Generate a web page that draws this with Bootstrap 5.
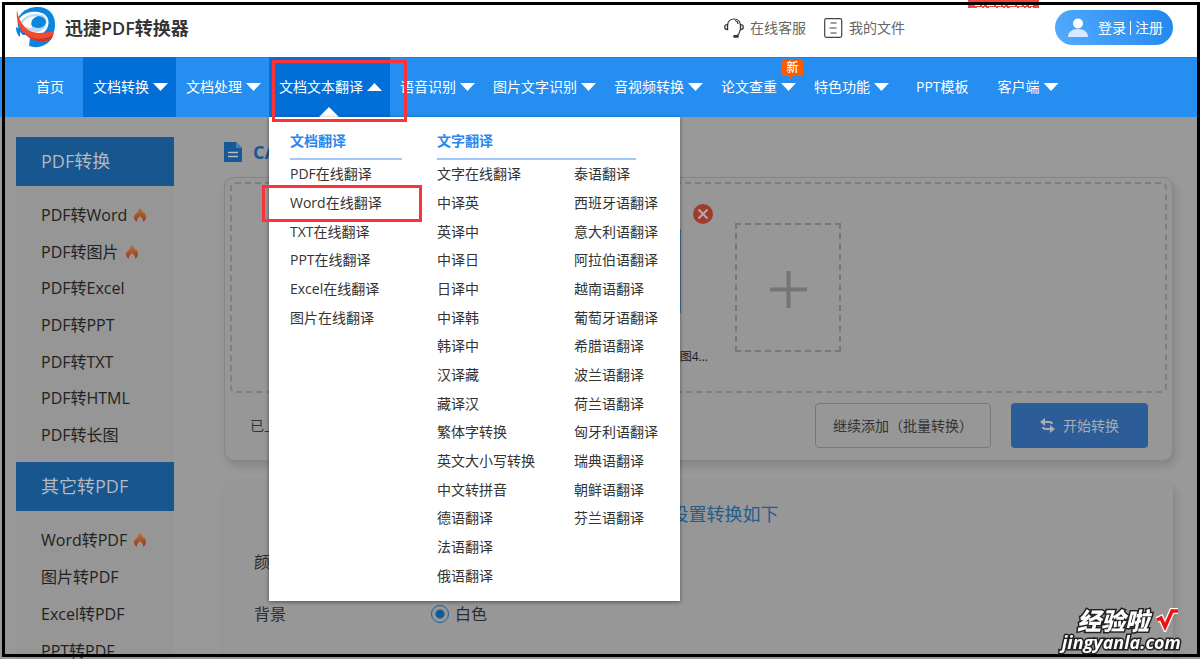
<!DOCTYPE html>
<html lang="zh-CN">
<head>
<meta charset="utf-8">
<meta name="viewport" content="width=device-width, initial-scale=1">
<title>迅捷PDF转换器</title>
<link rel="stylesheet" href="https://cdn.jsdelivr.net/npm/bootstrap@5.3.0/dist/css/bootstrap.min.css">
<style>
:root{--blue:#268ef0;--blue-dark:#026fd8;--shade:#999;--red:#fb3338}
body{font:14px/20px "Open Sans","Noto Sans CJK SC",sans-serif;color:#333;background:var(--shade);height:100vh;overflow:hidden}
a{text-decoration:none;color:inherit}
.page-frame{position:fixed;inset:2px 0 2px 2px;border:3px solid #000;pointer-events:none;z-index:50}
/* header */
.top-bar{background:#fff;height:57px;padding:0 27px 2px 15px;position:relative}
.brand-name{font-size:18px;font-weight:600;color:#333;margin-left:9px}
.top-link{color:#666;gap:6px}
.top-link.files{margin:0 150px 0 18px}
.promo{position:absolute;right:161px;top:0}
.login-btn{height:35px;border:0;border-radius:18px;padding:0 10px 0 13px;color:#fff;background:linear-gradient(60deg,#55acff,#1f87ee);gap:10px}
.login-btn .bar{width:1px;height:14px;background:#fff;margin:0 4px}
/* navigation */
.main-nav{background:var(--blue);height:60px;padding-left:17px;position:relative;z-index:10;color:#fff;box-shadow:inset 0 1px #1c80e6}
.nav-cell{height:60px;padding:0 8px 0 10px;gap:4px;position:relative;white-space:nowrap}
.nav-cell.plain{padding:0 19px}
.nav-cell.on{background:var(--blue-dark)}
.tri{width:15px;height:8px;background:#fff;clip-path:polygon(0 0,100% 0,50% 100%)}
.tri.up{clip-path:polygon(50% 0,100% 100%,0 100%)}
.nav-cell .pointer{position:absolute;bottom:0;left:50px;width:20px;height:10px}
.new-tag{position:absolute;top:3px;right:1px;width:21px;height:16px;border-radius:2px;background:#ff5a00;font-size:12px;line-height:16px;text-align:center;font-weight:500}
.new-tag::after{content:"";position:absolute;left:8px;top:16px;border:3px solid transparent;border-top:4px solid #ff5a00;border-left-width:0}
.mark-nav{position:absolute;left:3px;top:3px;width:135px;height:62px;border:3px solid var(--red);z-index:5}
.mark-item{position:absolute;left:-28px;top:-5px;width:160px;height:37px;border:3px solid var(--red)}
/* mega menu */
.mega{position:absolute;left:0;top:60px;width:411px;padding:9px 22px 10px 21px;background:#fff;color:#333;box-shadow:0 1px 4px #0007;gap:35px}
.mega h2{font-size:14px;line-height:30px;font-weight:700;color:#2a87ee;margin:0 0 1px;border-bottom:2px solid #a0c8f8;height:34px}
.mega-a{width:112px}
.mega-b h2{width:199px}
.mega ul{display:grid;grid-template-rows:repeat(15,1fr);height:430px;margin:0;padding:0;list-style:none}
.mega li{position:relative;display:flex;align-items:center;white-space:nowrap;padding-bottom:2px}
.mega-b .lists{display:grid;grid-template-columns:137px auto}
/* sidebar */
.side{width:158px;flex:none}
.side h2{background:#17568f;color:#b5b9bd;font-size:18px;line-height:49px;margin:0;padding-left:25px;font-weight:400}
.side ul{list-style:none;margin:0;padding:11px 0 9px 25px;min-height:276px;background:#969696;display:flex;flex-direction:column}
.side ul.short{min-height:167px}
.side li{flex:1;display:flex;align-items:center;gap:7px;font-size:16px;color:#222}
/* main column */
.layout{padding:20px 27px 0 16px;gap:50px}
.tool-title{font-size:18px;font-weight:700;color:#1a5792;line-height:30px;margin:0 0 10px;gap:11px}
.panel{background:#979797;border-radius:10px;box-shadow:3px 5px 9px #0002}
.panel.upload{border:1px solid #868686;padding:4px 5px 12px}
.drop{border:2px dashed #7f7f7f;border-radius:5px;height:211px;padding:39px 0 0;gap:27px}
.file-item{position:relative;width:108px;margin-left:368px;text-align:right;font-size:12px;color:#1b1b1b}
.thumb{width:81px;height:84px;border:2px solid #426f98;margin:6px 0 34px}
.remove{position:absolute;right:-5px;top:-19px;border:0;background:none;padding:0;line-height:0}
.add-tile{width:106px;height:129px;border:2px dashed #777;border-radius:0;background:none;padding:4px 0 0}
.upload-foot{padding:10px 19px 0 20px}
.act{height:45px;border-radius:4px;font-size:14px;padding:0}
.act-add{width:176px;border:1px solid #777;background:none;color:#333}
.act-go{width:137px;border:0;background:#2c5d98;color:#a8adb3;gap:8px}
.panel.settings{margin-top:20px;height:240px;padding:18px 30px;font-size:16px;color:#2c2c2c}
.settings h3{font-size:18px;line-height:30px;color:#235d8d;margin:0 0 23px;padding-right:20px;text-align:center;font-weight:400}
.opt-row{height:52px}
.opt-name{width:177px}
.opt-row input{appearance:none;width:18px;height:18px;margin:0 6px 0 0;border:1px solid #1a5e9d;border-radius:50%;background:radial-gradient(circle,#165998 4px,transparent 5px)}
/* watermark */
.wm{position:fixed;right:14px;bottom:7px;z-index:60;width:124px;color:#fff;-webkit-text-stroke:3px #222;paint-order:stroke fill}
.wm-cn{font:italic 900 24px/24px "Noto Sans CJK SC",sans-serif;padding-left:15px;gap:6px}
.wm-url{font:italic 700 18px/20px "Open Sans",sans-serif}
</style>
</head>
<body>
<svg width="0" height="0" class="position-absolute"><defs>
<linearGradient id="fg" x1="0" y1="0" x2="0" y2="1"><stop offset="0" stop-color="#b87335"/><stop offset="1" stop-color="#9c351c"/></linearGradient>
<symbol id="fire" viewBox="0 0 12 14"><path fill="url(#fg)" d="M5.500 0C9 2 8.300 4.500 9.300 5.400l.5-1.700C11 5.500 12 7.200 12 9.300c0 2.200-1.300 3.900-3 4.500.5-1.900-.4-4-3-5.600-2.400 1.500-3.500 3.700-3 5.600C1.300 13.100 0 11.500 0 9.300 0 6 3.200 5.500 4 3.400 5 2.300 5.200 1.200 5.500 0z"/></symbol>
</defs></svg>

<header class="top-bar d-flex align-items-center">
  <svg width="41" height="41" viewBox="0 0 41 41" aria-hidden="true">
    <path fill="#0c85dc" d="M3 11C8 2 16 0 23 0c10 0 17 7 17 17 0 6-1 8-3 11H8C3 24 2 18 3 11z"/>
    <path fill="#fff" d="M3 13C8 6 15 4 23 5c9 1 12 8 10 14-2 6-7 10-14 9C10 26 4 21 3 13z"/>
    <path fill="#b8dcf7" d="M5 16c4-7 10-9 18-9 7 0 10 6 8 11-3 7-9 8-15 6-5-2-8-4-11-8z"/>
    <ellipse cx="23" cy="15" rx="8" ry="6" fill="#0c85dc"/>
    <path fill="#fff" d="M7 17c4-6 10-8 16-8-6 2-8 6-6 12-5 0-8-1-10-4z"/>
    <path fill="#0c85dc" d="M1 20c0 4 1 8 4 10v-8zM15 31l-1 8c9 3 18 0 23-8z"/>
    <path fill="#f34a32" d="M2 3c2 14 11 23 22 23 6 0 11-1 15-2 0 3-1 6-3 8-9 5-20 2-27-6C3 20 1 11 2 3z"/>
    <path fill="#cf3425" d="M8 25c9 8 19 9 30 3l-2 4c-9 5-20 2-28-7z"/>
  </svg>
  <a href="#" class="brand-name">迅捷PDF转换器</a>
  <a href="#" class="top-link d-flex align-items-center ms-auto">
    <svg width="20" height="20" viewBox="0 0 20 20" fill="none" stroke="#333" stroke-width="1.200"><path d="M3.500 12V7C4.500-1 15.500-1 16.500 7v5"/><path d="M3.500 6.500C1 6.500.7 7.800.7 9s.3 2.700 2.800 2.700zM16.500 6.500c2.500 0 2.800 1.300 2.800 2.500s-.3 2.700-2.800 2.700zM16 12c-.5 4-2 5.500-4 6M11 2.500c2 .6 3 2 3 3.500"/><path d="M10.500 18.400h3" stroke-width="2.600" stroke-linecap="round"/></svg>在线客服</a>
  <a href="#" class="top-link files d-flex align-items-center">
    <svg width="19" height="20" viewBox="0 0 19 20" fill="none" stroke="#444"><rect x=".7" y=".7" width="17" height="18.600" rx="1.500" stroke-width="1.200"/><path d="M6.500 5h6M5.500 10h7M6.500 15h6" stroke-width="1.200"/></svg>我的文件</a>
  <button type="button" class="login-btn d-flex align-items-center">
    <svg width="20" height="20" viewBox="0 0 20 20"><circle cx="10" cy="5.500" r="5" fill="#fff"/><path d="M0 19c0-5 4-8 10-8s10 3 10 8z" fill="#d7eaff"/></svg>
    <span class="d-flex align-items-center">登录<i class="bar"></i>注册</span></button>
  <svg class="promo" width="71" height="8" viewBox="0 0 71 8" aria-hidden="true"><path fill="#f9453f" d="M0 0h71v8H0z"/><path stroke="#fff" stroke-width="1.200" stroke-dasharray="5 2 2 3 7 2" d="M7 5.500h58M9 7.500h56"/></svg>
</header>

<nav class="main-nav d-flex">
  <a href="#" class="nav-cell plain d-flex align-items-center">首页</a>
  <a href="#" class="nav-cell on d-flex align-items-center">文档转换<i class="tri"></i></a>
  <a href="#" class="nav-cell d-flex align-items-center">文档处理<i class="tri"></i></a>
  <div class="position-relative">
    <a href="#" class="nav-cell on d-flex align-items-center">文档文本翻译<i class="tri up"></i><i class="tri up pointer"></i></a>
    <div class="mega d-flex">
      <section class="mega-a"><h2>文档翻译</h2>
        <ul><li><a href="#">PDF在线翻译</a></li><li><a href="#">Word在线翻译</a><span class="mark-item"></span></li><li><a href="#">TXT在线翻译</a></li><li><a href="#">PPT在线翻译</a></li><li><a href="#">Excel在线翻译</a></li><li><a href="#">图片在线翻译</a></li></ul>
      </section>
      <section class="mega-b"><h2>文字翻译</h2>
        <div class="lists">
        <ul><li><a href="#">文字在线翻译</a></li><li><a href="#">中译英</a></li><li><a href="#">英译中</a></li><li><a href="#">中译日</a></li><li><a href="#">日译中</a></li><li><a href="#">中译韩</a></li><li><a href="#">韩译中</a></li><li><a href="#">汉译藏</a></li><li><a href="#">藏译汉</a></li><li><a href="#">繁体字转换</a></li><li><a href="#">英文大小写转换</a></li><li><a href="#">中文转拼音</a></li><li><a href="#">德语翻译</a></li><li><a href="#">法语翻译</a></li><li><a href="#">俄语翻译</a></li></ul>
        <ul><li><a href="#">泰语翻译</a></li><li><a href="#">西班牙语翻译</a></li><li><a href="#">意大利语翻译</a></li><li><a href="#">阿拉伯语翻译</a></li><li><a href="#">越南语翻译</a></li><li><a href="#">葡萄牙语翻译</a></li><li><a href="#">希腊语翻译</a></li><li><a href="#">波兰语翻译</a></li><li><a href="#">荷兰语翻译</a></li><li><a href="#">匈牙利语翻译</a></li><li><a href="#">瑞典语翻译</a></li><li><a href="#">朝鲜语翻译</a></li><li><a href="#">芬兰语翻译</a></li></ul>
        </div>
      </section>
    </div>
    <span class="mark-nav"></span>
  </div>
  <a href="#" class="nav-cell d-flex align-items-center">语音识别<i class="tri"></i></a>
  <a href="#" class="nav-cell d-flex align-items-center">图片文字识别<i class="tri"></i></a>
  <a href="#" class="nav-cell d-flex align-items-center">音视频转换<i class="tri"></i></a>
  <a href="#" class="nav-cell d-flex align-items-center">论文查重<i class="tri"></i><span class="new-tag">新</span></a>
  <a href="#" class="nav-cell d-flex align-items-center">特色功能<i class="tri"></i></a>
  <a href="#" class="nav-cell plain d-flex align-items-center">PPT模板</a>
  <a href="#" class="nav-cell d-flex align-items-center">客户端<i class="tri"></i></a>
</nav>

<div class="layout d-flex align-items-start">
  <aside class="side">
    <h2>PDF转换</h2>
    <ul>
      <li><a href="#">PDF转Word</a><svg width="12" height="14"><use href="#fire"/></svg></li>
      <li><a href="#">PDF转图片</a><svg width="12" height="14"><use href="#fire"/></svg></li>
      <li><a href="#">PDF转Excel</a></li><li><a href="#">PDF转PPT</a></li><li><a href="#">PDF转TXT</a></li><li><a href="#">PDF转HTML</a></li><li><a href="#">PDF转长图</a></li>
    </ul>
    <h2>其它转PDF</h2>
    <ul class="short">
      <li><a href="#">Word转PDF</a><svg width="12" height="14"><use href="#fire"/></svg></li>
      <li><a href="#">图片转PDF</a></li><li><a href="#">Excel转PDF</a></li><li><a href="#">PPT转PDF</a></li>
    </ul>
  </aside>
  <main class="flex-grow-1">
    <h1 class="tool-title d-flex align-items-center"><svg width="18" height="20" viewBox="0 0 18 20"><path fill="#165998" d="M0 0h12l6 6v14H0z"/><path fill="#4d7ca9" d="M12 0l6 6h-6z"/><path stroke="#b5bcc4" stroke-width="1.500" d="M4 10.500h10M4 14.500h10"/></svg>CAD</h1>
    <section class="panel upload">
      <div class="drop d-flex align-items-start">
        <div class="file-item"><div class="thumb"></div>图4...
          <button type="button" class="remove" aria-label="删除"><svg width="20" height="20" viewBox="0 0 20 20"><circle cx="10" cy="10" r="10" fill="#9f3c2e"/><path stroke="#b5aaa8" stroke-width="2" d="M5.500 5.500l9 9m0-9l-9 9"/></svg></button></div>
        <button type="button" class="add-tile" aria-label="添加"><svg width="37" height="37" viewBox="0 0 37 37"><path stroke="#757575" stroke-width="4" d="M18.500 0v37M0 18.500h37"/></svg></button>
      </div>
      <div class="upload-foot d-flex align-items-center">
        <span class="me-auto">已上</span>
        <button type="button" class="act act-add me-3 ms-3">继续添加（批量转换）</button>
        <button type="button" class="act act-go d-flex align-items-center justify-content-center ms-1"><svg width="15" height="15" viewBox="0 0 15 15" fill="none" stroke="#a8adb3" stroke-width="2"><path d="M3 4h6q3 0 3 2M12 11H6q-3 0-3-2"/><path fill="#a8adb3" stroke="none" d="M0 4l5-4v8zM15 11l-5-4v8z"/></svg>开始转换</button>
      </div>
    </section>
    <section class="panel settings">
      <h3>当前文件设置转换如下</h3>
      <div class="opt-row d-flex align-items-start"><span class="opt-name">颜</span></div>
      <div class="opt-row d-flex align-items-start"><span class="opt-name">背景</span><label class="d-flex align-items-center"><input type="radio" name="bg" checked>白色</label></div>
    </section>
  </main>
</div>

<div class="wm"><div class="wm-cn d-flex align-items-center">经验啦<svg width="24" height="24" viewBox="0 0 24 24"><path fill="none" stroke="#fff" stroke-width="6" d="M2 12l4-2 4 9L17 3h6"/><path fill="none" stroke="#f01010" stroke-width="3.500" d="M2 12l4-2 4 9L17 3h6"/></svg></div><div class="wm-url">jingyanla.com</div></div>
<div class="page-frame"></div>
<script src="https://cdn.jsdelivr.net/npm/bootstrap@5.3.0/dist/js/bootstrap.bundle.min.js"></script>
</body>
</html>
